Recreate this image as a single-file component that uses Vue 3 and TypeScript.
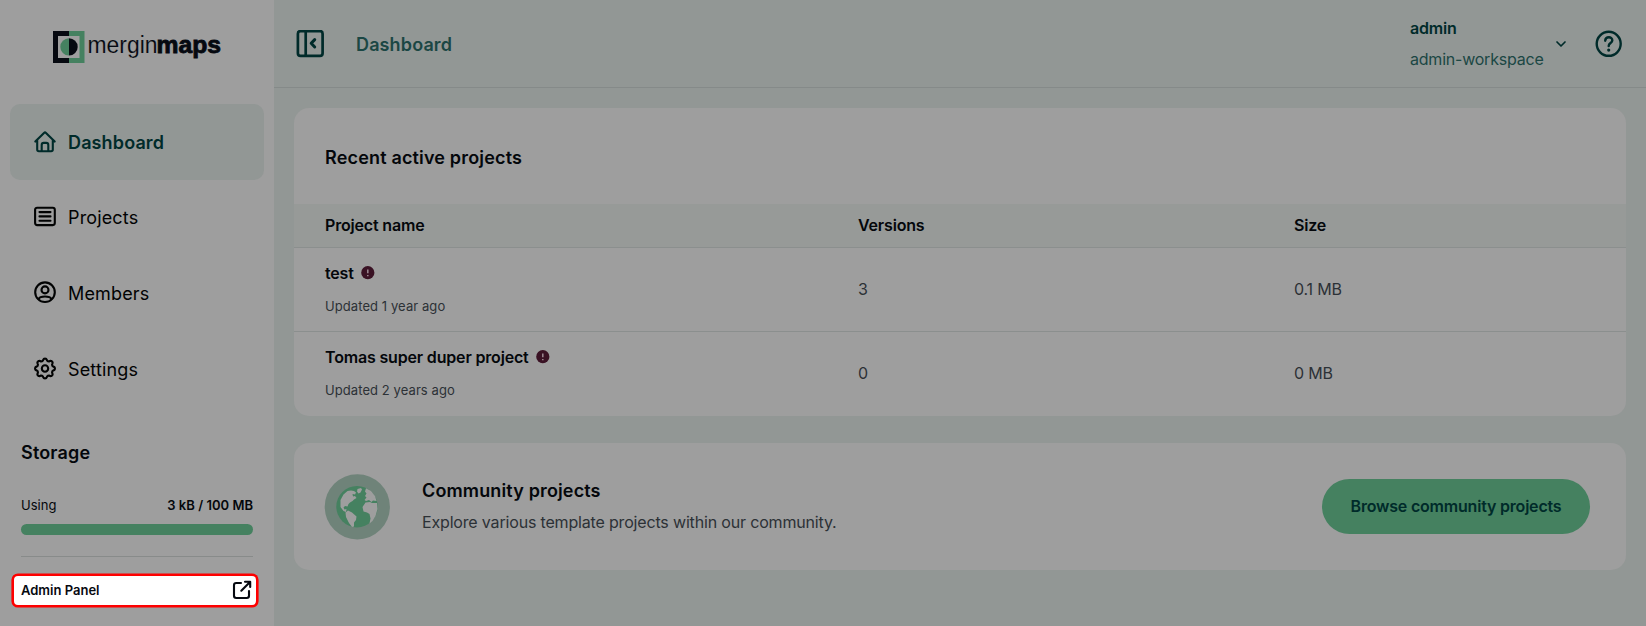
<script setup lang="ts">
interface NavItem {
  label: string
  icon: 'home' | 'list' | 'user' | 'gear'
  active?: boolean
}
interface Project {
  name: string
  updated: string
  versions: number
  size: string
}

const navItems: NavItem[] = [
  { label: 'Dashboard', icon: 'home', active: true },
  { label: 'Projects', icon: 'list' },
  { label: 'Members', icon: 'user' },
  { label: 'Settings', icon: 'gear' },
]

const projects: Project[] = [
  { name: 'test', updated: 'Updated 1 year ago', versions: 3, size: '0.1 MB' },
  { name: 'Tomas super duper project', updated: 'Updated 2 years ago', versions: 0, size: '0 MB' },
]

// Eight-toothed outline for the settings icon
function gearPath(): string {
  const pts: string[] = []
  const teeth = 8
  for (let i = 0; i < 96; i++) {
    const a = (i / 96) * Math.PI * 2 - Math.PI / 2
    const w = Math.cos(a * teeth)
    const r = 8.9 + 1.1 * Math.tanh(w * 1.5)
    pts.push(`${(12 + r * Math.cos(a)).toFixed(2)} ${(11.5 + r * Math.sin(a)).toFixed(2)}`)
  }
  return `M${pts.join('L')}Z`
}
const gear = gearPath()
</script>

<template>
  <div class="app">
    <aside class="sidebar">
      <svg class="logo" width="170" height="34" viewBox="0 0 170 34">
        <path d="M0 0H16V32H0Z" fill="#060910" />
        <path d="M16 0H31.500V32H16Z" fill="#458160" />
        <path d="M5 5H26.500V27H5Z" fill="#9e9e9e" />
        <path d="M16 7.200A8.700 8.700 0 0 0 16 24.600Z" fill="#458160" />
        <path d="M16 7.200A8.700 8.700 0 0 1 16 24.600Z" fill="#060910" />
        <text x="34.500" y="21.900" textLength="70" lengthAdjust="spacingAndGlyphs" class="logo-thin">mergin</text>
        <text x="103.500" y="21.900" textLength="64.500" lengthAdjust="spacingAndGlyphs" class="logo-bold">maps</text>
      </svg>

      <nav class="nav">
        <a v-for="item in navItems" :key="item.label" class="nav-item" :class="{ active: item.active }">
          <svg class="nav-icon" width="24" height="24" viewBox="0 0 24 24">
            <template v-if="item.icon === 'home'">
              <path d="M2.300 11.600L11 2.900Q12 1.900 13 2.900L21.700 11.600M4.200 10.500V19.500Q4.200 21.200 5.900 21.200H18.100Q19.800 21.200 19.800 19.500V10.500" />
              <path d="M8.700 21V14.900Q8.700 12.900 10.700 12.900H13.300Q15.300 12.900 15.300 14.900V21" />
            </template>
            <template v-else-if="item.icon === 'list'">
              <rect x="2.100" y="2.700" width="19.700" height="17.400" rx="2" />
              <path d="M6.500 7.100H17.500M6.500 11.400H17.500M6.500 15.700H17.500" />
            </template>
            <template v-else-if="item.icon === 'user'">
              <circle cx="12" cy="11.200" r="9.800" />
              <circle cx="12" cy="8.900" r="3.500" />
              <path d="M5.600 18.100C7 14.600 17 14.600 18.400 18.100" />
            </template>
            <template v-else>
              <path :d="gear" />
              <circle cx="12" cy="11.500" r="3.200" />
            </template>
          </svg>
          <span class="nav-label">{{ item.label }}</span>
        </a>
      </nav>

      <section class="storage">
        <h2 class="storage-title">Storage</h2>
        <div class="usage">
          <span>Using</span>
          <strong>3 kB / 100 MB</strong>
        </div>
        <div class="bar"></div>
        <div class="divider"></div>
      </section>

      <a class="admin-link">
        <span>Admin Panel</span>
        <svg width="20" height="20" viewBox="0 0 20 20">
          <path d="M9 3H4.200Q2 3 2 5.200V15.800Q2 18 4.200 18H14.800Q17 18 17 15.800V11M9.300 10.700L18 2M13 1.800H18.200V7" />
        </svg>
      </a>
    </aside>

    <main class="main">
      <header class="header">
        <svg class="collapse" width="28" height="28" viewBox="0 0 28 28">
          <rect x="1.900" y="1.100" width="24.700" height="24.700" rx="2.600" />
          <path d="M9.700 2V25.500" />
          <path d="M18.700 9.600L15.200 13.300L18.700 17" class="thick" />
        </svg>
        <h1 class="page-title">Dashboard</h1>
        <div class="account">
          <strong>admin</strong>
          <span>admin-workspace</span>
        </div>
        <svg class="chevron" width="12" height="8" viewBox="0 0 12 8">
          <path d="M2 2L6 6L10 2" />
        </svg>
        <svg class="help" width="28" height="28" viewBox="0 0 28 28">
          <circle cx="13.700" cy="13.800" r="12" />
          <path d="M10.200 10.700C10.500 6.100 17.500 6.300 17.300 10.500C17.200 13.100 13.700 13.100 13.700 16" />
          <circle cx="13.700" cy="20.100" r="1.600" class="dot" />
        </svg>
      </header>

      <div class="content">
        <section class="card projects">
          <h2 class="card-title">Recent active projects</h2>
          <div class="row head">
            <span>Project name</span>
            <span>Versions</span>
            <span>Size</span>
          </div>
          <div v-for="p in projects" :key="p.name" class="row">
            <div class="project">
              <div class="project-name">
                <span>{{ p.name }}</span>
                <svg width="14" height="14" viewBox="0 0 14 14">
                  <circle cx="6.800" cy="6.700" r="6.600" fill="#3a1224" />
                  <path d="M6.800 3.400V7.300M6.800 9V10.300" stroke="#9e8b94" stroke-width="1.500" />
                </svg>
              </div>
              <div class="updated">{{ p.updated }}</div>
            </div>
            <span>{{ p.versions }}</span>
            <span>{{ p.size }}</span>
          </div>
        </section>

        <section class="card community">
          <svg class="globe" width="66" height="66" viewBox="0 0 66 66">
            <circle cx="33.300" cy="32.800" r="32.600" fill="#6f8379" />
            <circle cx="33" cy="32.700" r="20.700" fill="#458160" />
            <g fill="#9e9e9e">
              <path d="M16.500 26L19.500 20.500L23.500 17L27 16.500L30 17L32 18.500L31 20.500L28.500 20L29 22.500L31 22L32.500 24L30 25.500L28.500 27L26 28.500L24.500 30L23.500 32.500L21 32L19.500 33.500L20.500 35.500L22.500 35L22 38L19.500 37L16.500 33Z" />
              <path d="M33.500 15L37 14L38 15.500L36.500 18.500L34.500 19.500L33 17.500Z" />
              <path d="M21.500 38.500L24 36.500L28 38.500L32.500 42.500L32 46L30 48.500L30 52.500L28 53L25 49L22 43Z" />
              <path d="M42 14.200L47 17L51 22L52.500 27L49 26.500L47.500 28L45 26L42 27L40.500 26L42.500 23.500L41 22L42.500 19.500L41 17.500Z" />
              <path d="M41.500 28.500L46 28L48 29L53 29L53.500 35L51.500 42L48.500 47L45.500 49.500L46.500 44.500L45.500 40L43 38.500L39.500 37.500L38.500 33Z" />
            </g>
          </svg>
          <div class="community-text">
            <h2>Community projects</h2>
            <p>Explore various template projects within our community.</p>
          </div>
          <button class="browse" type="button">Browse community projects</button>
        </section>
      </div>
    </main>
  </div>
</template>

<style>
html,
body {
  margin: 0;
  background: #929795;
}
</style>

<style scoped>
.app {
  display: flex;
  width: 1646px;
  height: 626px;
  overflow: hidden;
  background: #929795;
  color: #04070b;
  font-family: Inter, "Liberation Sans", sans-serif;
  font-size: 16px;
  letter-spacing: -0.170px;
}
h1,
h2,
p {
  margin: 0;
}
svg {
  flex: none;
  display: block;
}
.sidebar {
  width: 274px;
  flex: none;
  box-sizing: border-box;
  padding-top: 31px;
  background: #9e9e9e;
}
.logo {
  margin-left: 53px;
}
.logo text {
  fill: #060910;
  font-family: "Liberation Sans", Arial, sans-serif;
  font-size: 23px;
  letter-spacing: 0;
}
.logo .logo-thin {
  stroke: #9e9e9e;
  stroke-width: 0.150px;
}
.logo .logo-bold {
  font-weight: 700;
  stroke: #060910;
  stroke-width: 0.800px;
}
.nav {
  margin: 39px 10px 0;
}
.nav-item {
  display: flex;
  align-items: center;
  gap: 11.500px;
  height: 75.600px;
  padding: 0 22.500px;
  border-radius: 10px;
  font-size: 18px;
  letter-spacing: 0.150px;
  color: #020303;
}
.nav-label {
  padding-top: 1px;
}
.nav-item.active {
  background: #929795;
  color: #002b2a;
  font-weight: 600;
  letter-spacing: 0.130px;
}
.nav-icon,
.admin-link svg {
  fill: none;
  stroke: currentColor;
  stroke-width: 2.100;
  stroke-linecap: round;
  stroke-linejoin: round;
}
.storage {
  margin: 35px 21px 0;
}
.storage-title {
  font-size: 18px;
  font-weight: 600;
  letter-spacing: 0.170px;
  line-height: 24px;
}
.usage {
  display: flex;
  justify-content: space-between;
  margin-top: 29.200px;
  font-size: 13px;
  letter-spacing: 0.020px;
  line-height: 20px;
}
.usage strong {
  font-weight: 600;
}
.bar {
  height: 11px;
  margin-top: 9px;
  border-radius: 6px;
  background: #458160;
}
.divider {
  height: 1px;
  margin-top: 21px;
  background: #888b8a;
}
.admin-link {
  display: flex;
  align-items: center;
  justify-content: space-between;
  box-sizing: border-box;
  width: 246px;
  height: 33px;
  margin: 17px 0 0 11.500px;
  padding: 0 3.500px 0 7.500px;
  border: 2px solid #fe0000;
  border-radius: 6px;
  box-shadow: 0 0 0 0.600px #fe0000;
  background: #fff;
  color: #060910;
  font-size: 13px;
  font-weight: 600;
  letter-spacing: 0;
}
.main {
  flex: 1;
  min-width: 0;
}
.header {
  display: flex;
  align-items: center;
  box-sizing: border-box;
  height: 88px;
  padding: 0 23px 0 22px;
  border-bottom: 1px solid #858a89;
}
.header svg {
  fill: none;
  stroke: #002b2a;
  stroke-width: 2.400;
  stroke-linecap: round;
  stroke-linejoin: round;
}
.header .collapse {
  stroke-width: 2.700;
}
.header .thick {
  stroke-width: 3;
}
.header .chevron {
  margin: 0 28px 0 12px;
  stroke-width: 1.700;
}
.header .dot {
  fill: #002b2a;
  stroke: none;
}
.page-title {
  flex: 1;
  margin-left: 32px;
  padding-top: 2px;
  color: #1b4744;
  font-size: 18px;
  font-weight: 600;
  letter-spacing: 0.130px;
}
.account {
  display: flex;
  flex-direction: column;
  width: 133px;
  color: #1b4744;
  line-height: 31px;
  letter-spacing: -0.220px;
  white-space: nowrap;
}
.account strong {
  color: #002b2a;
  font-weight: 600;
}
.content {
  display: flex;
  flex-direction: column;
  gap: 27px;
  padding: 20px 20px 0;
}
.card {
  overflow: hidden;
  border-radius: 15px;
  background: #9e9e9e;
}
.projects {
  height: 308px;
}
.card-title {
  box-sizing: border-box;
  height: 96px;
  padding: 1px 31px 0;
  font-size: 18px;
  font-weight: 600;
  letter-spacing: 0.170px;
  line-height: 97px;
}
.row {
  display: grid;
  grid-template-columns: 533px 436px 1fr;
  align-items: center;
  box-sizing: border-box;
  height: 83px;
  padding: 0 0 2px 31px;
  color: #2c3136;
}
.row + .row + .row {
  height: 85px;
  border-top: 1px solid #8b8f8e;
}
.row.head {
  height: 44px;
  border-bottom: 1px solid #8b8f8e;
  background: #979a98;
  color: #04070b;
  font-weight: 600;
}
.project-name {
  display: flex;
  align-items: center;
  gap: 7px;
  color: #04070b;
  font-weight: 600;
  line-height: 20px;
}
.updated {
  margin-top: 14px;
  font-size: 13px;
  letter-spacing: 0.080px;
  line-height: 18px;
}
.community {
  display: flex;
  align-items: center;
  height: 127px;
  box-sizing: border-box;
  padding: 0 36px 0 30px;
}
.community-text {
  flex: 1;
  margin-left: 32px;
}
.community-text h2 {
  font-size: 18px;
  font-weight: 600;
  letter-spacing: 0.140px;
  line-height: 30px;
}
.community-text p {
  color: #2c3136;
  line-height: 32px;
}
.browse {
  width: 268px;
  height: 55px;
  padding: 0 0 2px;
  border: 0;
  border-radius: 28px;
  background: #458160;
  color: #002b2a;
  font: 600 16px Inter, sans-serif;
  letter-spacing: -0.200px;
}
</style>
